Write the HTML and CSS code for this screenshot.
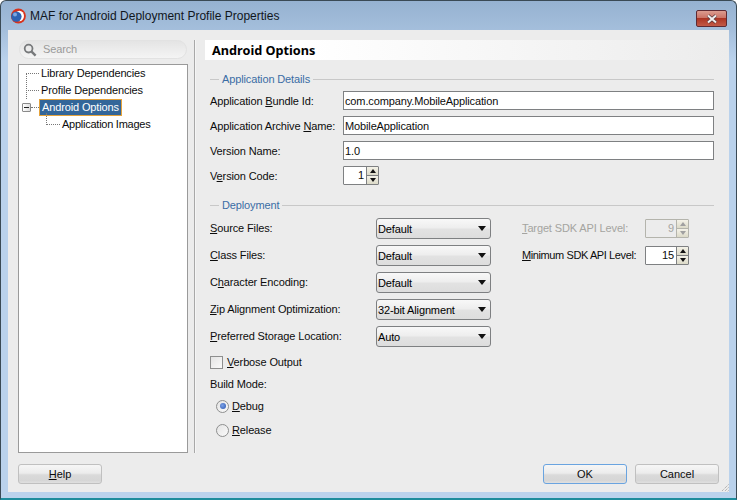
FILE: index.html
```html
<!DOCTYPE html>
<html lang="en">
<head>
<meta charset="utf-8">
<title>MAF for Android Deployment Profile Properties</title>
<link rel="stylesheet" href="styles.css">
</head>
<body>
<div class="window">
  <header class="titlebar">
    <svg class="logo" width="16" height="16" viewBox="0 0 16 16"><circle cx="8.4" cy="8" r="7.5" fill="#d8321c"/><ellipse cx="9.4" cy="8" rx="4.6" ry="5.2" fill="#fff"/><circle cx="6.4" cy="8.6" r="5.2" fill="#2c62b4"/><circle cx="5" cy="6.6" r="2" fill="#7ea6de"/></svg>
    <span class="title">MAF for Android Deployment Profile Properties</span>
    <button class="close" type="button"><svg width="14" height="10" viewBox="0 0 14 10"><path d="M3 1.5 L11 8.5 M11 1.5 L3 8.5" stroke="#5a3a3e" stroke-width="3.6" fill="none"/><path d="M3 1.5 L11 8.5 M11 1.5 L3 8.5" stroke="#f2f0f0" stroke-width="2" fill="none"/></svg></button>
  </header>
  <div class="client">
    <div class="main">
      <aside class="nav">
        <div class="search">
          <svg width="14" height="14" viewBox="0 0 14 14"><circle cx="5.6" cy="5.6" r="3.9" fill="none" stroke="#77797b" stroke-width="1.8"/><path d="M8.6 8.6 L12.6 12.6" stroke="#77797b" stroke-width="2.4"/></svg>
          <span>Search</span>
        </div>
        <div class="tree">
          <div class="node"><i class="tick start"></i><span class="nlabel">Library Dependencies</span></div>
          <div class="node"><i class="tick through"></i><span class="nlabel">Profile Dependencies</span></div>
          <div class="node"><b class="minus"></b><i class="tick short"></i><span class="nlabel sel">Android Options</span></div>
          <div class="node child"><i class="elbow"></i><span class="nlabel narrow">Application Images</span></div>
        </div>
      </aside>
      <div class="divider"></div>
      <section class="panel">
        <h1 class="heading">Android Options</h1>
        <div class="legend first"><span>Application Details</span></div>
        <div class="form">
          <label>Application <u>B</u>undle Id:</label><div class="input">com.company.MobileApplication</div>
          <label>Application Archive <u>N</u>ame:</label><div class="input">MobileApplication</div>
          <label>Version Name:</label><div class="input">1.0</div>
          <label>V<u>e</u>rsion Code:</label>
          <div class="spin code"><span class="val">1</span><span class="arrows"><em class="up"></em><em class="down"></em></span></div>
        </div>
        <div class="legend second"><span>Deployment</span></div>
        <div class="deploy">
          <div class="selects">
            <label><u>S</u>ource Files:</label><div class="select">Default</div>
            <label><u>C</u>lass Files:</label><div class="select">Default</div>
            <label>C<u>h</u>aracter Encoding:</label><div class="select">Default</div>
            <label><u>Z</u>ip Alignment Optimization:</label><div class="select">32-bit Alignment</div>
            <label><u>P</u>referred Storage Location:</label><div class="select">Auto</div>
          </div>
          <div class="sdk">
            <label class="dis"><u>T</u>arget SDK API Level:</label>
            <div class="spin dis"><span class="val">9</span><span class="arrows"><em class="up"></em><em class="down"></em></span></div>
            <label class="tight"><u>M</u>inimum SDK API Level:</label>
            <div class="spin"><span class="val">15</span><span class="arrows"><em class="up"></em><em class="down"></em></span></div>
          </div>
        </div>
        <div class="check"><i class="box"></i><span><u>V</u>erbose Output</span></div>
        <div class="build">Build Mode:</div>
        <div class="radio r1"><i class="dot on"></i><span><u>D</u>ebug</span></div>
        <div class="radio r2"><i class="dot"></i><span><u>R</u>elease</span></div>
      </section>
    </div>
    <footer class="footer">
      <button class="btn" type="button"><u>H</u>elp</button>
      <div class="right">
        <button class="btn def" type="button">OK</button>
        <button class="btn" type="button">Cancel</button>
      </div>
      <svg class="grip" width="9" height="9" viewBox="0 0 9 9"><path d="M8.5 1.5 L1.5 8.5 M8.5 4.5 L4.5 8.5 M8.5 7.5 L7.5 8.5" stroke="#9a9a9a" stroke-width="1" stroke-dasharray="1 1" fill="none"/></svg>
    </footer>
  </div>
</div>
</body>
</html>
```

FILE: styles.css
```css
* { box-sizing: border-box; }
html, body { margin: 0; padding: 0; }
body { width: 737px; height: 500px; overflow: hidden; font-family: "Liberation Sans", "DejaVu Sans", sans-serif; font-size: 11px; letter-spacing: -0.13px; color: #0c0c0c; }
label { white-space: nowrap; }
u { text-underline-offset: 1px; }
.window { width: 737px; height: 500px; display: flex; flex-direction: column; padding: 0 7px 6px 7px; background: linear-gradient(#96b2d1 0, #a5bfdc 30px, #bad2ec 60px, #bad2ec 100%); border: 1px solid #3a4a55; border-bottom: 2px solid #1d8c9c; border-radius: 6px 6px 0 0; }
.titlebar { height: 29px; flex: none; display: flex; align-items: center; position: relative; padding: 1px 0 0 2px; }
.logo { flex: none; }
.title { margin-left: 4px; font-size: 12px; letter-spacing: 0; color: #10161c; }
.close { position: absolute; right: 2px; top: 9px; width: 31px; height: 17px; padding: 0; border: 1px solid #5e2a33; border-radius: 2px; background: linear-gradient(#dc9c90 0, #cb7467 45%, #ac3524 50%, #c25a48 100%); display: flex; align-items: center; justify-content: center; }
.client { flex: 1; background: #ececec; display: flex; flex-direction: column; }
.main { height: 423px; flex: none; padding: 10px 0 0 10px; display: flex; }
.nav { width: 170px; flex: none; display: flex; flex-direction: column; }
.search { height: 19px; margin: 0 0 5px 1px; width: 168px; border: 1px solid #e2e2e2; border-radius: 10px; background: linear-gradient(#e4e4e4, #f4f4f4); display: flex; align-items: center; padding-left: 3px; gap: 6px; color: #9a9a9a; }
.search span { margin-top: -2px; }
.tree { height: 389px; background: #fff; border: 1px solid #9a9a9a; padding: 0 0 0 5px; }
.node { height: 17px; display: flex; align-items: center; position: relative; }
.tick { display: block; position: relative; width: 13px; border-top: 1px dotted #777; margin-right: 1px; margin-left: 2px; }
.tick.start::before, .tick.through::before { content: ""; position: absolute; left: 0; border-left: 1px dotted #777; }
.tick.start::before { top: 0; height: 9px; }
.tick.through::before { top: -9px; height: 17px; }
.tick.short { width: 8px; margin-left: 0; margin-right: 0; }
.nlabel { padding: 0 2px 0 1px; height: 17px; line-height: 16px; white-space: nowrap; }
.nlabel.narrow { letter-spacing: -0.25px; }
.node .sel { width: 83px; background: #336699; color: #fff; border: 1px solid #e5a33c; line-height: 14px; height: 17px; padding: 0 2px; }
.minus { display: block; flex: none; width: 9px; height: 9px; margin-left: -2px; border: 1px solid #8a8a8a; border-radius: 1px; background: linear-gradient(90deg, #fff, #ddd); position: relative; }
.minus::after { content: ""; position: absolute; left: 1px; right: 1px; top: 3px; border-top: 1px solid #222; }
.node.child { padding-left: 22px; }
.elbow { display: block; width: 14px; height: 12px; margin-top: -12px; margin-right: 1px; border-left: 1px dotted #777; border-bottom: 1px dotted #777; }
.divider { width: 2px; flex: none; margin-left: 6px; background: #a8a8a8; border-right: 1px solid #f5f5f5; height: 413px; }
.panel { flex: 1; margin-left: 9px; height: 413px; display: flex; flex-direction: column; min-width: 0; }
.heading { margin: 0; height: 20px; background: linear-gradient(90deg, #fff 0, #fff 20%, #ececec 100%); font-family: "Noto Sans", sans-serif; font-size: 12.7px; letter-spacing: 0; font-weight: 700; line-height: 21px; padding-left: 7px; color: #000; }
.legend { margin: 0 15px 0 5px; height: 14px; display: flex; align-items: center; color: #3a6ca5; gap: 3px; }
.legend::before { content: ""; width: 9px; border-top: 1px solid #c8c8c8; }
.legend::after { content: ""; flex: 1; border-top: 1px solid #c8c8c8; }
.legend.first { margin-top: 12px; }
.legend.second { margin-top: 13px; margin-bottom: 6px; }
.legend span { margin-top: -1px; }
.form { display: grid; grid-template-columns: 133px 371px; grid-auto-rows: 19px; row-gap: 6px; margin: 5px 0 0 5px; align-items: center; }
.input { height: 19px; background: #fff; border: 1px solid #7e8082; padding-left: 1px; line-height: 18px; white-space: nowrap; }
.spin { width: 36px; height: 19px; display: flex; background: #fff; border: 1px solid #7e8082; border-radius: 1px; }
.spin .val { flex: 1; text-align: right; padding-right: 2px; line-height: 17px; }
.arrows { width: 12px; flex: none; display: flex; flex-direction: column; border-left: 1px solid #7e8082; }
.arrows em { flex: 1; display: flex; align-items: center; justify-content: center; background: linear-gradient(#f4f2e8, #dcdac8); }
.arrows em + em { border-top: 1px solid #7e8082; }
.arrows em::after { content: ""; border-left: 3.5px solid transparent; border-right: 3.5px solid transparent; }
.arrows .up::after { border-bottom: 4px solid #111; }
.arrows .down::after { border-top: 4px solid #111; }
.deploy { display: flex; margin-left: 5px; }
.selects { display: grid; grid-template-columns: 166px 115px; grid-auto-rows: 21px; row-gap: 6px; align-items: center; }
.selects label { margin-top: -2px; }
.select { height: 21px; border: 1px solid #7e8082; border-radius: 3px; background: linear-gradient(#f8f8f8 0, #eeeeee 45%, #e2e2e2 55%, #dddddd 100%); padding-left: 1px; line-height: 20px; position: relative; color: #000; }
.select::after { content: ""; position: absolute; right: 4px; top: 7px; border-left: 4px solid transparent; border-right: 4px solid transparent; border-top: 5px solid #111; }
.sdk { margin: 1px 0 0 31px; display: grid; grid-template-columns: 123px 44px; grid-auto-rows: 19px; row-gap: 8px; align-items: center; align-content: start; }
.sdk label { margin-top: -1px; }
.sdk label.tight { letter-spacing: -0.4px; }
.sdk .spin { width: 44px; }
.dis { color: #a4a4a0; }
.spin.dis { border-color: #b4b4ac; background: #ececec; }
.spin.dis .arrows { border-left-color: #b4b4ac; }
.spin.dis .arrows em + em { border-top-color: #b4b4ac; }
.spin.dis .up::after { border-bottom-color: #a0a0a0; }
.spin.dis .down::after { border-top-color: #a0a0a0; }
.check { display: flex; align-items: center; height: 14px; margin: 8px 0 0 5px; }
.box { display: block; width: 13px; height: 13px; border: 1px solid #8e8f8f; background: linear-gradient(135deg, #e4e4e4, #fafafa); margin-right: 4px; }
.build { margin: 8px 0 0 5px; height: 15px; line-height: 15px; }
.radio { display: flex; align-items: center; height: 14px; margin-left: 11px; }
.radio.r1 { margin-top: 7px; }
.radio.r2 { margin-top: 10px; }
.dot { display: flex; align-items: center; justify-content: center; width: 13px; height: 13px; border-radius: 50%; border: 1px solid #8e8f8f; background: linear-gradient(135deg, #e4e4e4, #fafafa); margin-right: 3px; }
.dot.on::after { content: ""; width: 6px; height: 6px; border-radius: 50%; background: radial-gradient(circle at 40% 40%, #7aa0e6, #2a56b0); }
.footer { flex: 1; display: flex; justify-content: space-between; align-items: flex-start; padding: 11px 10px 0 10px; position: relative; }
.right { display: flex; gap: 8px; }
.btn { width: 84px; height: 20px; padding: 0; font: inherit; letter-spacing: 0; color: #0c0c0c; border: 1px solid #c0c0c0; border-radius: 3px; background: linear-gradient(#f6f6f6 0, #ececec 45%, #dadada 55%, #d6d6d6 85%, #e0e0e0 100%); }
.btn.def { border-color: #6aa4e0; }
.grip { position: absolute; right: 0; bottom: 0; }
```
